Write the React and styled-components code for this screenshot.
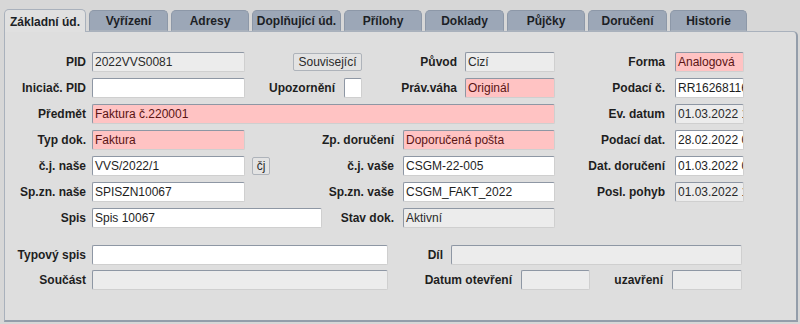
import React from 'react'
import styled, { createGlobalStyle } from 'styled-components'

const Global = createGlobalStyle`
  html, body {
    margin: 0;
    padding: 0;
    background: #d7d7d7;
  }
  body {
    font-family: 'Liberation Sans', Arial, sans-serif;
    font-size: 12px;
    color: #1e1e1e;
  }
`

const Page = styled.div`
  width: 800px;
  height: 324px;
  padding-top: 9px;
  box-sizing: border-box;
`

const TabStrip = styled.div`
  display: flex;
  align-items: flex-end;
  gap: 3px;
  height: 22px;
  margin-left: 4px;
`

const Tab = styled.div`
  box-sizing: border-box;
  width: ${p => p.$w}px;
  height: ${p => (p.$active ? 23 : 21)}px;
  display: flex;
  align-items: center;
  justify-content: center;
  font-weight: bold;
  font-size: 12px;
  white-space: nowrap;
  color: #1c1f26;
  background: ${p => (p.$active ? '#e0e0e0' : '#9ca7b7')};
  border: 1px solid ${p => (p.$active ? '#a9b1bc' : '#8d98a8')};
  border-bottom: ${p => (p.$active ? 'none' : '1px solid #a9b1bc')};
  border-radius: 5px 5px 0 0;
  margin-bottom: ${p => (p.$active ? '-1px' : '0')};
  position: relative;
  z-index: ${p => (p.$active ? 1 : 0)};
  padding-top: ${p => (p.$active ? '1px' : '0')};
`

const Panel = styled.div`
  box-sizing: border-box;
  margin-left: 4px;
  width: 794px;
  height: 291px;
  background: #dedede;
  border: 1px solid #a9b1bc;
  border-right: 2px solid #939daa;
  border-bottom: 2px solid #939daa;
  border-radius: 0 5px 0 0;
`

const TopGrid = styled.div`
  display: grid;
  grid-template-columns: 87px 153px 7px 18px 23px 51px 18px 41px 62px 90px 120px 69px;
  grid-template-rows: repeat(7, 20px);
  row-gap: 6px;
  margin-top: 20px;
`

const BottomGrid = styled.div`
  display: grid;
  grid-template-columns: 87px 296px 63px 70px 69px 82px 70px;
  grid-template-rows: repeat(2, 20px);
  row-gap: 5px;
  margin-top: 17px;
`

const Label = styled.div`
  grid-column: ${p => p.$col};
  grid-row: ${p => p.$row};
  display: flex;
  align-items: center;
  justify-content: flex-end;
  padding-right: ${p => p.$pad ?? 6}px;
  font-weight: bold;
  font-size: 12px;
  color: #1e1e1e;
  white-space: nowrap;
`

const tones = {
  white: { bg: '#ffffff', fg: '#1e1e1e' },
  gray: { bg: '#ececec', fg: '#2a2a2a' },
  pink: { bg: '#ffc3c3', fg: '#5a1414' },
}

const Field = styled.div`
  grid-column: ${p => p.$col};
  grid-row: ${p => p.$row};
  box-sizing: border-box;
  width: ${p => (p.$w ? `${p.$w}px` : 'auto')};
  height: 20px;
  display: flex;
  align-items: center;
  padding: 0 2px;
  overflow: hidden;
  white-space: nowrap;
  font-size: 12px;
  background: ${p => tones[p.$tone || 'white'].bg};
  color: ${p => tones[p.$tone || 'white'].fg};
  border: 1px solid;
  border-color: #8e97a4 #cfcfcf #cfcfcf #8e97a4;
  border-radius: 2px;
`

const Button = styled.div`
  grid-column: ${p => p.$col};
  grid-row: ${p => p.$row};
  align-self: center;
  box-sizing: border-box;
  height: 18px;
  display: flex;
  align-items: center;
  justify-content: center;
  font-size: 12px;
  color: #2a2a2a;
  background: #e3e3e3;
  border: 1px solid #aeb3ba;
  border-radius: 2px;
  white-space: nowrap;
`

const Check = styled.div`
  grid-column: ${p => p.$col};
  grid-row: ${p => p.$row};
  box-sizing: border-box;
  width: 18px;
  height: 20px;
  background: #fff;
  border: 1px solid;
  border-color: #8e97a4 #cfcfcf #cfcfcf #8e97a4;
  border-radius: 2px;
`

const tabs = [
  ['Základní úd.', 82],
  ['Vyřízení', 79],
  ['Adresy', 78],
  ['Doplňující úd.', 89],
  ['Přílohy', 78],
  ['Doklady', 79],
  ['Půjčky', 78],
  ['Doručení', 79],
  ['Historie', 77],
]

export default function App() {
  return (
    <Page>
      <Global />
      <TabStrip>
        {tabs.map(([name, w], i) => (
          <Tab key={name} $w={w} $active={i === 0}>{name}</Tab>
        ))}
      </TabStrip>
      <Panel>
        <TopGrid>
          {/* row 1 */}
          <Label $col="1 / 2" $row={1}>PID</Label>
          <Field $col="2 / 3" $row={1} $tone="gray">2022VVS0081</Field>
          <Button $col="6 / 8" $row={1}>Související</Button>
          <Label $col="8 / 10" $row={1} $pad={8}>Původ</Label>
          <Field $col="10 / 11" $row={1} $tone="gray">Cizí</Field>
          <Label $col="11 / 12" $row={1} $pad={10}>Forma</Label>
          <Field $col="12 / 13" $row={1} $tone="pink">Analogová</Field>

          {/* row 2 */}
          <Label $col="1 / 2" $row={2}>Iniciač. PID</Label>
          <Field $col="2 / 3" $row={2} />
          <Label $col="3 / 7" $row={2} $pad={9}>Upozornění</Label>
          <Check $col="7 / 8" $row={2} />
          <Label $col="8 / 10" $row={2} $pad={8}>Práv.váha</Label>
          <Field $col="10 / 11" $row={2} $tone="pink">Originál</Field>
          <Label $col="11 / 12" $row={2} $pad={10}>Podací č.</Label>
          <Field $col="12 / 13" $row={2}>RR162681160CZ</Field>

          {/* row 3 */}
          <Label $col="1 / 2" $row={3}>Předmět</Label>
          <Field $col="2 / 11" $row={3} $tone="pink">Faktura č.220001</Field>
          <Label $col="11 / 12" $row={3} $pad={10}>Ev. datum</Label>
          <Field $col="12 / 13" $row={3} $tone="gray">01.03.2022 10:12</Field>

          {/* row 4 */}
          <Label $col="1 / 2" $row={4}>Typ dok.</Label>
          <Field $col="2 / 3" $row={4} $tone="pink">Faktura</Field>
          <Label $col="3 / 9" $row={4} $pad={9}>Zp. doručení</Label>
          <Field $col="9 / 11" $row={4} $tone="pink">Doporučená pošta</Field>
          <Label $col="11 / 12" $row={4} $pad={10}>Podací dat.</Label>
          <Field $col="12 / 13" $row={4}>28.02.2022 00:00</Field>

          {/* row 5 */}
          <Label $col="1 / 2" $row={5}>č.j. naše</Label>
          <Field $col="2 / 3" $row={5}>VVS/2022/1</Field>
          <Button $col="4 / 5" $row={5}>čj</Button>
          <Label $col="5 / 9" $row={5} $pad={9}>č.j. vaše</Label>
          <Field $col="9 / 11" $row={5}>CSGM-22-005</Field>
          <Label $col="11 / 12" $row={5} $pad={10}>Dat. doručení</Label>
          <Field $col="12 / 13" $row={5}>01.03.2022 09:00</Field>

          {/* row 6 */}
          <Label $col="1 / 2" $row={6}>Sp.zn. naše</Label>
          <Field $col="2 / 3" $row={6}>SPISZN10067</Field>
          <Label $col="3 / 9" $row={6} $pad={9}>Sp.zn. vaše</Label>
          <Field $col="9 / 11" $row={6}>CSGM_FAKT_2022</Field>
          <Label $col="11 / 12" $row={6} $pad={10}>Posl. pohyb</Label>
          <Field $col="12 / 13" $row={6} $tone="gray">01.03.2022 10:12</Field>

          {/* row 7 */}
          <Label $col="1 / 2" $row={7}>Spis</Label>
          <Field $col="2 / 7" $row={7} $w={230}>Spis 10067</Field>
          <Label $col="7 / 9" $row={7} $pad={9}>Stav dok.</Label>
          <Field $col="9 / 11" $row={7} $tone="gray">Aktivní</Field>
        </TopGrid>

        <BottomGrid>
          <Label $col="1 / 2" $row={1}>Typový spis</Label>
          <Field $col="2 / 3" $row={1} />
          <Label $col="3 / 4" $row={1} $pad={8}>Díl</Label>
          <Field $col="4 / 8" $row={1} $tone="gray" />

          <Label $col="1 / 2" $row={2}>Součást</Label>
          <Field $col="2 / 3" $row={2} $tone="gray" />
          <Label $col="3 / 5" $row={2} $pad={9}>Datum otevření</Label>
          <Field $col="5 / 6" $row={2} $tone="gray" />
          <Label $col="6 / 7" $row={2} $pad={9}>uzavření</Label>
          <Field $col="7 / 8" $row={2} $tone="gray" />
        </BottomGrid>
      </Panel>
    </Page>
  )
}
